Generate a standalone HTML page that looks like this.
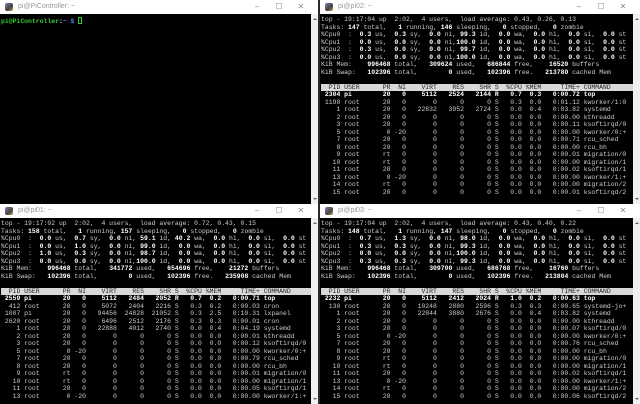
<!DOCTYPE html>
<html><head><meta charset="utf-8"><style>
*{margin:0;padding:0;box-sizing:border-box}
body{width:640px;height:404px;background:#2a2a2a;overflow:hidden;position:relative;font-family:"Liberation Sans",sans-serif}
.win{position:absolute;background:#000;overflow:hidden}
.tb{height:14px;background:#fff;position:relative;font-size:7px;color:#999;line-height:14px;padding-left:18px}
.tb .ic{position:absolute;left:5px;top:3px;width:8px;height:8px;background:linear-gradient(135deg,#8a7aa8,#444 60%,#c9a04a);border-radius:2px}
.tb .ctl{position:absolute;right:6px;top:0;font-size:8px;color:#888;letter-spacing:0}
.tb .ctl span{display:inline-block;width:22px;text-align:center}
.body{position:absolute;top:14px;left:0;right:7px;bottom:0;background:#000;overflow:hidden}
.sb{position:absolute;top:14px;right:0;width:7px;bottom:0;background:#f0f0f0}
.sb:before{content:"";position:absolute;left:2px;top:4px;border:2px solid transparent;border-bottom:2px solid #666;border-top:none}
.sb:after{content:"";position:absolute;left:2px;bottom:4px;border:2px solid transparent;border-top:2px solid #666;border-bottom:none}
pre{font-family:"Liberation Mono",monospace;font-size:6.45px;line-height:7.5px;color:#ccc;padding:2px 0 0 1px;white-space:pre}
b{color:#fff;font-weight:bold}
.h{background:#d8d8d8;color:#222;display:inline-block;width:312px}
.g{color:#3c3;font-weight:bold}
.bl{color:#57f;font-weight:bold}
</style></head><body>

<div class="win" style="left:0;top:0;width:318px;height:204px">
<div class="tb"><i class="ic"></i>pi@PiController: ~<div class="ctl"><span>&#8211;</span><span>&#9744;</span><span>&#10005;</span></div></div>
<div class="body"><pre style="padding-top:3px"><span class="g">pi@PiController</span><b>:</b><span class="bl">~ $</span> <span style="display:inline-block;width:4px;height:7px;border:1px solid #3c3;vertical-align:-1px"></span></pre></div>
<div class="sb"></div>
</div>

<div class="win" style="left:320px;top:0;width:320px;height:204px">
<div class="tb"><i class="ic"></i>pi@pi02: ~<div class="ctl"><span>&#8211;</span><span>&#9744;</span><span>&#10005;</span></div></div>
<div class="body"><pre>top - 19:17:04 up  2:02,  4 users,  load average: 0.43, 0.26, 0.13
Tasks: <b>147</b> total,   <b>1</b> running, <b>146</b> sleeping,   <b>0</b> stopped,   <b>0</b> zombie
%Cpu0  :  <b>0.3</b> us,  <b>0.3</b> sy,  <b>0.0</b> ni, <b>99.3</b> id,  <b>0.0</b> wa,  <b>0.0</b> hi,  <b>0.0</b> si,  <b>0.0</b> st
%Cpu1  :  <b>0.0</b> us,  <b>0.0</b> sy,  <b>0.0</b> ni,<b>100.0</b> id,  <b>0.0</b> wa,  <b>0.0</b> hi,  <b>0.0</b> si,  <b>0.0</b> st
%Cpu2  :  <b>0.3</b> us,  <b>0.0</b> sy,  <b>0.0</b> ni, <b>99.7</b> id,  <b>0.0</b> wa,  <b>0.0</b> hi,  <b>0.0</b> si,  <b>0.0</b> st
%Cpu3  :  <b>0.0</b> us,  <b>0.0</b> sy,  <b>0.0</b> ni,<b>100.0</b> id,  <b>0.0</b> wa,  <b>0.0</b> hi,  <b>0.0</b> si,  <b>0.0</b> st
KiB Mem:    <b>996468</b> total,   <b>309624</b> used,   <b>686844</b> free,    <b>16520</b> buffers
KiB Swap:   <b>102396</b> total,        <b>0</b> used,   <b>102396</b> free.   <b>213780</b> cached Mem

<span class="h">  PID USER      PR  NI    VIRT    RES    SHR S  %CPU %MEM     TIME+ COMMAND </span>
<b> 2304 pi        20   0    5112   2524   2144 R   0.7  0.3   0:00.72 top</b>
 1198 root      20   0       0      0      0 S   0.3  0.0   0:01.12 kworker/1:0
    1 root      20   0   22832   3952   2724 S   0.0  0.4   0:03.82 systemd
    2 root      20   0       0      0      0 S   0.0  0.0   0:00.00 kthreadd
    3 root      20   0       0      0      0 S   0.0  0.0   0:00.11 ksoftirqd/0
    5 root       0 -20       0      0      0 S   0.0  0.0   0:00.00 kworker/0:+
    7 root      20   0       0      0      0 S   0.0  0.0   0:00.71 rcu_sched
    8 root      20   0       0      0      0 S   0.0  0.0   0:00.00 rcu_bh
    9 root      rt   0       0      0      0 S   0.0  0.0   0:00.01 migration/0
   10 root      rt   0       0      0      0 S   0.0  0.0   0:00.00 migration/1
   11 root      20   0       0      0      0 S   0.0  0.0   0:00.02 ksoftirqd/1
   13 root       0 -20       0      0      0 S   0.0  0.0   0:00.00 kworker/1:+
   14 root      rt   0       0      0      0 S   0.0  0.0   0:00.00 migration/2
   15 root      20   0       0      0      0 S   0.0  0.0   0:00.01 ksoftirqd/2</pre></div>
<div class="sb"></div>
</div>

<div class="win" style="left:0;top:204px;width:318px;height:200px">
<div class="tb"><i class="ic"></i>pi@pi01: ~<div class="ctl"><span>&#8211;</span><span>&#9744;</span><span>&#10005;</span></div></div>
<div class="body"><pre>top - 19:17:02 up  2:02,  4 users,  load average: 0.72, 0.43, 0.15
Tasks: <b>158</b> total,   <b>1</b> running, <b>157</b> sleeping,   <b>0</b> stopped,   <b>0</b> zombie
%Cpu0  :  <b>0.0</b> us,  <b>0.7</b> sy,  <b>0.0</b> ni, <b>59.1</b> id, <b>40.2</b> wa,  <b>0.0</b> hi,  <b>0.0</b> si,  <b>0.0</b> st
%Cpu1  :  <b>0.0</b> us,  <b>1.0</b> sy,  <b>0.0</b> ni, <b>99.0</b> id,  <b>0.0</b> wa,  <b>0.0</b> hi,  <b>0.0</b> si,  <b>0.0</b> st
%Cpu2  :  <b>1.0</b> us,  <b>0.3</b> sy,  <b>0.0</b> ni, <b>98.7</b> id,  <b>0.0</b> wa,  <b>0.0</b> hi,  <b>0.0</b> si,  <b>0.0</b> st
%Cpu3  :  <b>0.0</b> us,  <b>0.0</b> sy,  <b>0.0</b> ni,<b>100.0</b> id,  <b>0.0</b> wa,  <b>0.0</b> hi,  <b>0.0</b> si,  <b>0.0</b> st
KiB Mem:    <b>996468</b> total,   <b>341772</b> used,   <b>654696</b> free,    <b>21272</b> buffers
KiB Swap:   <b>102396</b> total,        <b>0</b> used,   <b>102396</b> free.   <b>235908</b> cached Mem

<span class="h">  PID USER      PR  NI    VIRT    RES    SHR S  %CPU %MEM     TIME+ COMMAND </span>
<b> 2559 pi        20   0    5112   2484   2052 R   0.7  0.2   0:00.71 top</b>
  412 root      20   0    5072   2404   2216 S   0.3  0.2   0:00.03 cron
 1007 pi        20   0   94456  24828  21052 S   0.3  2.5   0:10.31 lxpanel
 2620 root      20   0    6496   2512   2176 S   0.3  0.3   0:00.01 cron
    1 root      20   0   22888   4012   2740 S   0.0  0.4   0:04.19 systemd
    2 root      20   0       0      0      0 S   0.0  0.0   0:00.01 kthreadd
    3 root      20   0       0      0      0 S   0.0  0.0   0:00.12 ksoftirqd/0
    5 root       0 -20       0      0      0 S   0.0  0.0   0:00.00 kworker/0:+
    7 root      20   0       0      0      0 S   0.0  0.0   0:00.79 rcu_sched
    8 root      20   0       0      0      0 S   0.0  0.0   0:00.00 rcu_bh
    9 root      rt   0       0      0      0 S   0.0  0.0   0:00.01 migration/0
   10 root      rt   0       0      0      0 S   0.0  0.0   0:00.00 migration/1
   11 root      20   0       0      0      0 S   0.0  0.0   0:00.05 ksoftirqd/1
   13 root       0 -20       0      0      0 S   0.0  0.0   0:00.00 kworker/1:+</pre></div>
<div class="sb"></div>
</div>

<div class="win" style="left:320px;top:204px;width:320px;height:200px">
<div class="tb"><i class="ic"></i>pi@pi03: ~<div class="ctl"><span>&#8211;</span><span>&#9744;</span><span>&#10005;</span></div></div>
<div class="body"><pre>top - 19:17:04 up  2:02,  4 users,  load average: 0.43, 0.40, 0.22
Tasks: <b>148</b> total,   <b>1</b> running, <b>147</b> sleeping,   <b>0</b> stopped,   <b>0</b> zombie
%Cpu0  :  <b>0.7</b> us,  <b>1.3</b> sy,  <b>0.0</b> ni, <b>98.0</b> id,  <b>0.0</b> wa,  <b>0.0</b> hi,  <b>0.0</b> si,  <b>0.0</b> st
%Cpu1  :  <b>0.3</b> us,  <b>0.3</b> sy,  <b>0.0</b> ni, <b>99.3</b> id,  <b>0.0</b> wa,  <b>0.0</b> hi,  <b>0.0</b> si,  <b>0.0</b> st
%Cpu2  :  <b>0.0</b> us,  <b>0.0</b> sy,  <b>0.0</b> ni,<b>100.0</b> id,  <b>0.0</b> wa,  <b>0.0</b> hi,  <b>0.0</b> si,  <b>0.0</b> st
%Cpu3  :  <b>0.3</b> us,  <b>0.3</b> sy,  <b>0.0</b> ni, <b>99.3</b> id,  <b>0.0</b> wa,  <b>0.0</b> hi,  <b>0.0</b> si,  <b>0.0</b> st
KiB Mem:    <b>996468</b> total,   <b>309700</b> used,   <b>686768</b> free,    <b>16760</b> buffers
KiB Swap:   <b>102396</b> total,        <b>0</b> used,   <b>102396</b> free.   <b>213804</b> cached Mem

<span class="h">  PID USER      PR  NI    VIRT    RES    SHR S  %CPU %MEM     TIME+ COMMAND </span>
<b> 2232 pi        20   0    5112   2412   2024 R   1.0  0.2   0:00.63 top</b>
  130 root      20   0   10248   2880   2596 S   0.3  0.3   0:00.65 systemd-jo+
    1 root      20   0   22844   3880   2676 S   0.0  0.4   0:03.82 systemd
    2 root      20   0       0      0      0 S   0.0  0.0   0:00.00 kthreadd
    3 root      20   0       0      0      0 S   0.0  0.0   0:00.07 ksoftirqd/0
    5 root       0 -20       0      0      0 S   0.0  0.0   0:00.00 kworker/0:+
    7 root      20   0       0      0      0 S   0.0  0.0   0:00.76 rcu_sched
    8 root      20   0       0      0      0 S   0.0  0.0   0:00.00 rcu_bh
    9 root      rt   0       0      0      0 S   0.0  0.0   0:00.00 migration/0
   10 root      rt   0       0      0      0 S   0.0  0.0   0:00.00 migration/1
   11 root      20   0       0      0      0 S   0.0  0.0   0:00.02 ksoftirqd/1
   13 root       0 -20       0      0      0 S   0.0  0.0   0:00.00 kworker/1:+
   14 root      rt   0       0      0      0 S   0.0  0.0   0:00.00 migration/2
   15 root      20   0       0      0      0 S   0.0  0.0   0:00.06 ksoftirqd/2</pre></div>
<div class="sb"></div>
</div>

</body></html>
